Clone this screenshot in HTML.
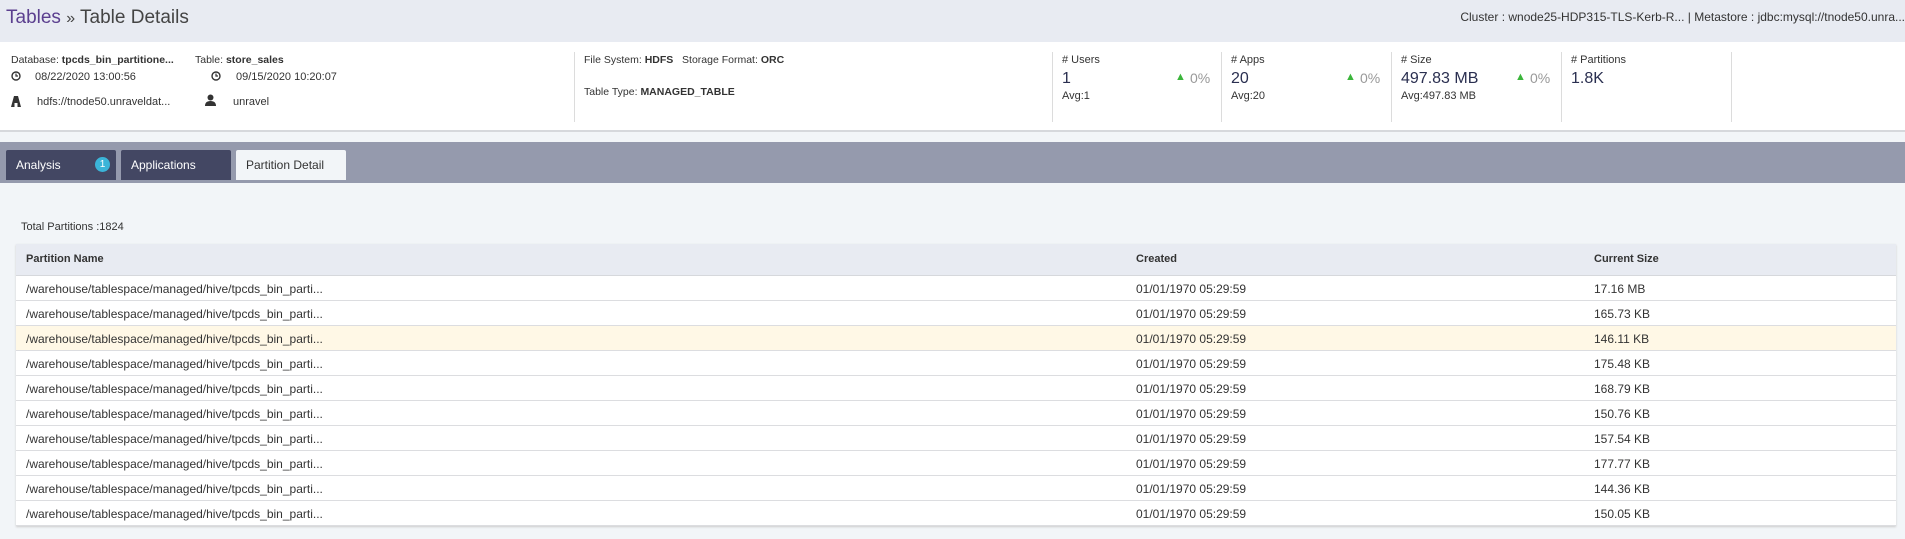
<!DOCTYPE html>
<html><head><style>
*{margin:0;padding:0;box-sizing:border-box}
body{width:1905px;height:539px;overflow:hidden;background:#f2f5f8;font-family:"Liberation Sans",sans-serif;color:#333;position:relative}
.a{position:absolute;white-space:nowrap}
.hdr{position:absolute;left:0;top:0;width:1905px;height:42px;background:#e8ebf2}
.card{position:absolute;left:0;top:42px;width:1905px;height:90px;background:#fff;border-bottom:2px solid #d6d8dc}
.vd{position:absolute;top:52px;height:70px;width:1px;background:#dcdcdc}
.s{font-size:11px;color:#333}
.tabbar{position:absolute;left:0;top:142px;width:1905px;height:41px;background:#959aad}
.tab{position:absolute;top:150px;height:30px;width:110px;background:#434763;color:#fff;font-size:12px;line-height:30px;padding-left:10px;border-radius:2px 2px 0 0}
table{position:absolute;left:16px;top:244px;width:1880px;border-collapse:collapse;font-size:12px;background:#fff;box-shadow:0 1px 2px #ccc;table-layout:fixed}
th{background:#e8ebf2;height:31px;text-align:left;font-weight:bold;padding-left:10px;border-bottom:1px solid #d6d8dc;font-size:11px}
td{height:25px;padding-left:10px;padding-top:2px;border-bottom:1px solid #dcdde0}
tr.h td{background:#fff8e6}
</style></head><body>
<div class="hdr"></div>
<div class="a" style="left:6px;top:7px;font-size:19px;color:#5b3f8f">Tables <span style="color:#444;font-size:16px">»</span> <span style="color:#444"> Table Details</span></div>
<div class="a" style="right:0;top:10px;font-size:12px;color:#333">Cluster : wnode25-HDP315-TLS-Kerb-R... | Metastore : jdbc:mysql://tnode50.unra...</div>
<div class="card"></div>
<div class="a s" style="left:11px;top:54px;font-size:10.5px">Database: <b>tpcds_bin_partitione...</b></div>
<div class="a s" style="left:195px;top:54px;font-size:10.5px">Table: <b>store_sales</b></div>
<svg class="a" style="left:11px;top:71px" width="10" height="10" viewBox="0 0 10 10"><circle cx="5" cy="5" r="4" fill="none" stroke="#333" stroke-width="1.4"/><path d="M5 2.5V5H7" fill="none" stroke="#333" stroke-width="1.2"/></svg>
<div class="a s" style="left:35px;top:71px">08/22/2020 13:00:56</div>
<svg class="a" style="left:211px;top:71px" width="10" height="10" viewBox="0 0 10 10"><circle cx="5" cy="5" r="4" fill="none" stroke="#333" stroke-width="1.4"/><path d="M5 2.5V5H7" fill="none" stroke="#333" stroke-width="1.2"/></svg>
<div class="a s" style="left:236px;top:71px">09/15/2020 10:20:07</div>
<svg class="a" style="left:11px;top:96px" width="10" height="11" viewBox="0 0 10 11"><path d="M3 0H7L10 11H6.5V7H3.5V11H0Z" fill="#333"/></svg>
<div class="a s" style="left:37px;top:96px">hdfs://tnode50.unraveldat...</div>
<svg class="a" style="left:205px;top:94px" width="11" height="12" viewBox="0 0 11 12"><circle cx="5.5" cy="3.5" r="3" fill="#333"/><path d="M0 12Q0 7 5.5 7Q11 7 11 12Z" fill="#333"/></svg>
<div class="a s" style="left:233px;top:96px">unravel</div>
<div class="vd" style="left:574px"></div>
<div class="a s" style="left:584px;top:54px;font-size:10.5px">File System: <b>HDFS</b> &nbsp;&nbsp;Storage Format: <b>ORC</b></div>
<div class="a s" style="left:584px;top:86px;font-size:10.5px">Table Type: <b>MANAGED_TABLE</b></div>
<div class="vd" style="left:1052px"></div><div class="vd" style="left:1221px"></div><div class="vd" style="left:1391px"></div><div class="vd" style="left:1561px"></div><div class="vd" style="left:1731px"></div>
<div class="a s" style="left:1062px;top:54px"># Users</div><div class="a" style="left:1062px;top:70px;font-size:16px;color:#2a2f50">1</div><div class="a s" style="left:1062px;top:90px">Avg:1</div>
<div class="a" style="left:1175px;top:71px;font-size:11px;color:#3bb53b">▲</div><div class="a" style="left:1190px;top:70px;font-size:14px;color:#999">0%</div>
<div class="a s" style="left:1231px;top:54px"># Apps</div><div class="a" style="left:1231px;top:70px;font-size:16px;color:#2a2f50">20</div><div class="a s" style="left:1231px;top:90px">Avg:20</div>
<div class="a" style="left:1345px;top:71px;font-size:11px;color:#3bb53b">▲</div><div class="a" style="left:1360px;top:70px;font-size:14px;color:#999">0%</div>
<div class="a s" style="left:1401px;top:54px"># Size</div><div class="a" style="left:1401px;top:70px;font-size:16px;color:#2a2f50">497.83 MB</div><div class="a s" style="left:1401px;top:90px">Avg:497.83 MB</div>
<div class="a" style="left:1515px;top:71px;font-size:11px;color:#3bb53b">▲</div><div class="a" style="left:1530px;top:70px;font-size:14px;color:#999">0%</div>
<div class="a s" style="left:1571px;top:54px"># Partitions</div><div class="a" style="left:1571px;top:70px;font-size:16px;color:#2a2f50">1.8K</div>
<div class="tabbar"></div>
<div class="tab" style="left:6px">Analysis<span style="position:absolute;left:89px;top:7px;width:15px;height:15px;border-radius:50%;background:#3bb4d8;font-size:10px;line-height:15px;text-align:center">1</span></div>
<div class="tab" style="left:121px">Applications</div>
<div class="tab" style="left:236px;background:#f2f5f8;color:#333">Partition Detail</div>
<div class="a s" style="left:21px;top:221px">Total Partitions :1824</div>
<table>
<colgroup><col style="width:1110px"><col style="width:458px"><col></colgroup>
<tr><th>Partition Name</th><th>Created</th><th>Current Size</th></tr>
<tr><td>/warehouse/tablespace/managed/hive/tpcds_bin_parti...</td><td>01/01/1970 05:29:59</td><td>17.16 MB</td></tr>
<tr><td>/warehouse/tablespace/managed/hive/tpcds_bin_parti...</td><td>01/01/1970 05:29:59</td><td>165.73 KB</td></tr>
<tr class="h"><td>/warehouse/tablespace/managed/hive/tpcds_bin_parti...</td><td>01/01/1970 05:29:59</td><td>146.11 KB</td></tr>
<tr><td>/warehouse/tablespace/managed/hive/tpcds_bin_parti...</td><td>01/01/1970 05:29:59</td><td>175.48 KB</td></tr>
<tr><td>/warehouse/tablespace/managed/hive/tpcds_bin_parti...</td><td>01/01/1970 05:29:59</td><td>168.79 KB</td></tr>
<tr><td>/warehouse/tablespace/managed/hive/tpcds_bin_parti...</td><td>01/01/1970 05:29:59</td><td>150.76 KB</td></tr>
<tr><td>/warehouse/tablespace/managed/hive/tpcds_bin_parti...</td><td>01/01/1970 05:29:59</td><td>157.54 KB</td></tr>
<tr><td>/warehouse/tablespace/managed/hive/tpcds_bin_parti...</td><td>01/01/1970 05:29:59</td><td>177.77 KB</td></tr>
<tr><td>/warehouse/tablespace/managed/hive/tpcds_bin_parti...</td><td>01/01/1970 05:29:59</td><td>144.36 KB</td></tr>
<tr><td>/warehouse/tablespace/managed/hive/tpcds_bin_parti...</td><td>01/01/1970 05:29:59</td><td>150.05 KB</td></tr>
</table>
</body></html>
